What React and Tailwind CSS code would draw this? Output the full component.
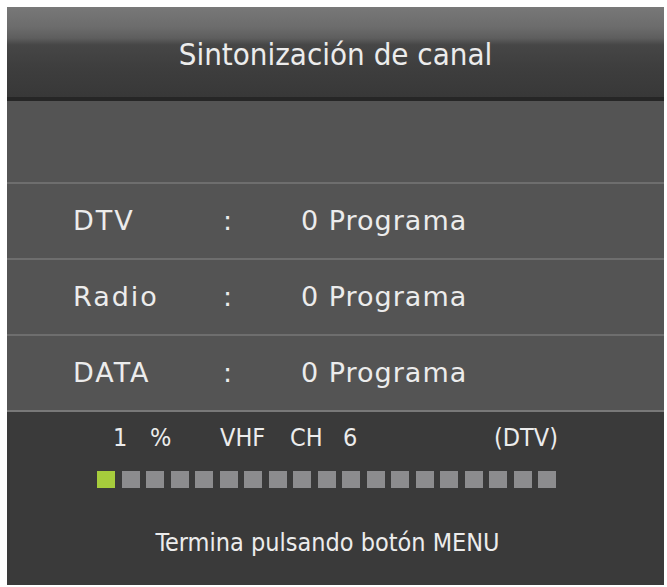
import React from 'react';

const channels = [
  { label: 'DTV', count: 0 },
  { label: 'Radio', count: 0 },
  { label: 'DATA', count: 0 },
];

const TOTAL_STEPS = 19;

const ChannelTuning = () => {
  const progress = 1;
  const done = Math.max(1, Math.round((progress / 100) * TOTAL_STEPS));

  return (
    <div className="min-h-screen bg-white pl-[7px] pr-[3px] pt-[7px] pb-[2px]">
      <div className="flex h-[578px] flex-col overflow-hidden bg-[#3a3a3a] text-[#ececec] [font-family:'DejaVu_Sans',sans-serif]">
        {/* Title bar with the glossy top */}
        <div className="flex h-[90px] items-center justify-center pt-[5px] bg-[linear-gradient(180deg,#787878_0px,#6c6c6c_20px,#5e5e5e_31px,#464646_38px,#3e3e3e_60px,#383838_90px)]">
          <h1 className="text-[31px] [font-stretch:condensed]">Sintonización de canal</h1>
        </div>
        <div className="h-[4px] bg-[#262626]" />

        {/* Empty band */}
        <div className="h-[81px] bg-[#545454]" />

        {/* Channel counters */}
        {channels.map((ch) => (
          <div
            key={ch.label}
            className="flex h-[76px] items-center border-t-2 border-[#6e6e6e] bg-[#545454] pl-[66px] text-[27px] tracking-[1px]"
          >
            <span className="w-[150px] tracking-[2px]">{ch.label}</span>
            <span className="w-[78px]">:</span>
            <span>{ch.count} Programa</span>
          </div>
        ))}

        {/* Scan status */}
        <div className="flex flex-1 flex-col border-t-2 border-[#787878] bg-[#3a3a3a] [font-stretch:condensed]">
          <div className="mt-[10px] flex h-[32px] items-center pl-[106px] pr-[106px] text-[25px]">
            <span className="w-[37px]">1</span>
            <span className="w-[70px]">%</span>
            <span className="w-[70px]">VHF</span>
            <span className="w-[53px]">CH</span>
            <span>6</span>
            <span className="ml-auto">(DTV)</span>
          </div>
          <div className="mt-[17px] flex gap-[6.5px] pl-[90px]">
            {Array.from({ length: TOTAL_STEPS }).map((_, i) => (
              <div
                key={i}
                className={i < done ? 'h-[17px] w-[18px] bg-[#a6cc3c]' : 'h-[17px] w-[18px] bg-[#8c8c8e]'}
              />
            ))}
          </div>
          <p className="mt-[36px] pr-[16px] text-center text-[25px]">
            Termina pulsando botón MENU
          </p>
        </div>
      </div>
    </div>
  );
};

export default function App() {
  return <ChannelTuning />;
}
